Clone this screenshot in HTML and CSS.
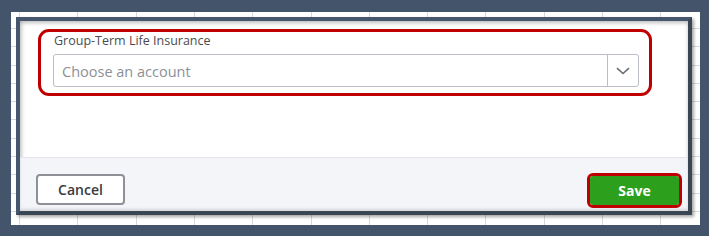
FILE: index.html
```html
<!DOCTYPE html>
<html lang="en">
<head>
    <meta charset="UTF-8">
    <title>Group-Term Life Insurance</title>
    <link rel="stylesheet" href="styles.css">
</head>
<body>
    <div class="sheet">
        <div class="dialog">
            <div class="dialog-body">
                <div class="highlight">
                    <label class="field-label" for="account">Group-Term Life Insurance</label>
                    <div class="select" id="account">
                        <span class="placeholder">Choose an account</span>
                        <span class="select-arrow">
                            <svg width="14" height="8" viewBox="0 0 14 8">
                                <path d="M1 1.2 L7 6.5 L13 1.2" fill="none" stroke="#6b6c72" stroke-width="1.6"/>
                            </svg>
                        </span>
                    </div>
                </div>
            </div>
            <div class="dialog-footer">
                <button class="btn-cancel">Cancel</button>
                <div class="save-ring">
                    <button class="btn-save">Save</button>
                </div>
            </div>
        </div>
    </div>
</body>
</html>
```

FILE: styles.css
```css
* {
    margin: 0;
    padding: 0;
    box-sizing: border-box;
    font-family: 'Open Sans', 'Liberation Sans', sans-serif;
}

body {
    width: 709px;
    height: 236px;
    background-color: #44546a;
    overflow: hidden;
    padding: 12px 9px 11px 11px;
}

.sheet {
    height: 213px;
    background-color: #fff;
    background-image:
        repeating-linear-gradient(90deg, transparent 0, transparent 8px, #d7d9dc 8px, #d7d9dc 9px, transparent 9px, transparent 58.3px),
        repeating-linear-gradient(180deg, transparent 0, transparent 16px, #d7d9dc 16px, #d7d9dc 17px, transparent 17px, transparent 18.3px);
    padding: 5px 8px 10px 5px;
}

.dialog {
    height: 198px;
    border: 4px solid #46566c;
    border-right-color: #3b4655;
    border-bottom-color: #3b4655;
    background-color: #fff;
    display: flex;
    flex-direction: column;
    box-shadow: 2px 2px 3px rgba(0, 0, 0, 0.35), inset 0 2px 4px rgba(0, 0, 0, 0.2), inset 2px 0 4px rgba(0, 0, 0, 0.15);
}

.dialog-body {
    height: 136px;
    padding: 8px 36px 0 18px;
}

.highlight {
    height: 67px;
    border: 3px solid #c00000;
    border-radius: 11px;
    padding: 1px 10px 0 12px;
}

.field-label {
    display: block;
    font-size: 12.5px;
    line-height: 16px;
    color: #4a4b50;
    margin-left: 1px;
    margin-bottom: 5px;
}

.select {
    display: flex;
    height: 33px;
    border: 1px solid #babec5;
    border-radius: 3px;
    background: #fff;
}

.placeholder {
    flex: 1;
    font-size: 14.5px;
    line-height: 31px;
    color: #8d9096;
    padding: 1px 0 0 8px;
}

.select-arrow {
    width: 31px;
    border-left: 1px solid #babec5;
    display: flex;
    align-items: center;
    justify-content: center;
}

.dialog-footer {
    flex: 1;
    background-color: #f4f5f8;
    border-top: 1px solid #e3e5e8;
    display: flex;
    justify-content: space-between;
    align-items: flex-start;
    padding: 15px 6px 0 16px;
    box-shadow: inset 0 -2px 3px rgba(0, 0, 0, 0.12);
}

.btn-cancel {
    width: 89px;
    height: 31px;
    background: #fff;
    border: 2px solid #8d9096;
    border-radius: 4px;
    font-size: 14px;
    font-weight: 600;
    color: #393a3d;
    margin-top: 1px;
}

.save-ring {
    border: 3px solid #c00000;
    border-radius: 6px;
}

.btn-save {
    display: block;
    width: 89px;
    height: 29px;
    background-color: #2ca01c;
    border: none;
    border-radius: 3px;
    font-size: 14px;
    font-weight: 700;
    color: #fff;
}
```
